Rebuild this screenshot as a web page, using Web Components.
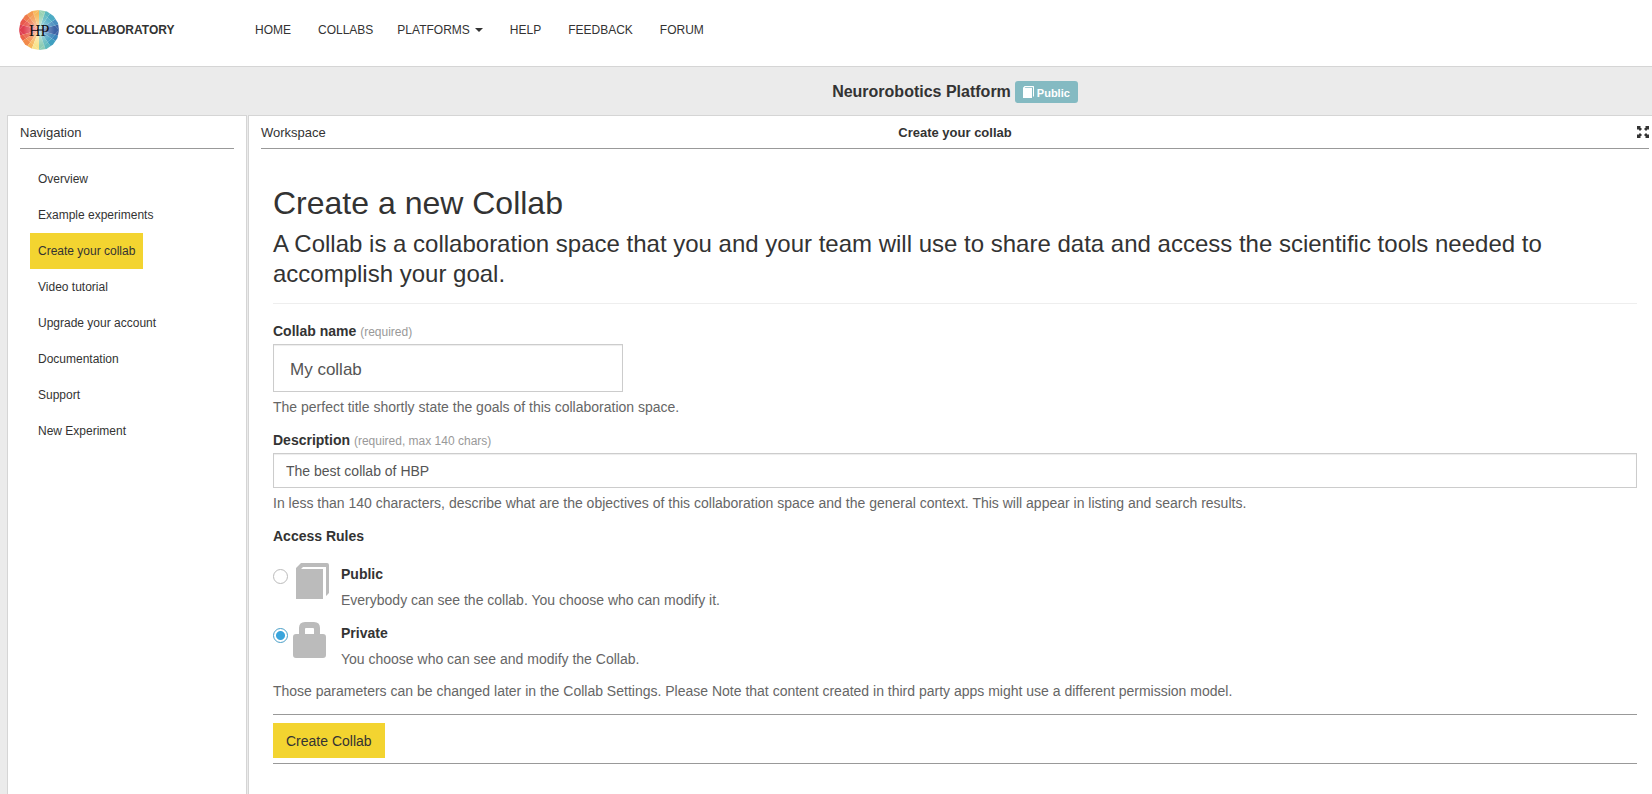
<!DOCTYPE html>
<html lang="en">
<head>
<meta charset="utf-8">
<title>Neurorobotics Platform - Create your collab</title>
<style>
html, body { height: 100%; margin: 0; }
body {
  --ink: #333;
  --muted: #666;
  --yellow: #f3d430;
  --rule: #999;
  --frame: #d5d5d5;
  font: 14px/20px "Liberation Sans", Arial, sans-serif;
  color: var(--ink);
  background: #ebebeb;
}
</style>
</head>
<body>
<collab-app></collab-app>

<script>
const define = (name, html) => {
  const template = document.createElement('template');
  template.innerHTML = html;
  customElements.define(name, class extends HTMLElement {
    constructor() {
      super();
      this.attachShadow({ mode: 'open' }).append(template.content.cloneNode(true));
    }
  });
};

define('hbp-logo', `
<style>
:host { display: block; width: 40px; height: 40px; }
svg { display: block; }
text { font: 16px "Liberation Serif", serif; fill: #111; }
</style>
<svg width="40" height="40" viewBox="0 0 40 40" role="img" aria-label="HBP">
  <defs>
    <clipPath id="disc"><path d="M20 0l8 1.500 6.500 4.500 4.500 7 1 7-1.500 8-4.500 6.500-6.500 4.500-7 1-8-1.500-6.500-4-4.500-7L0 20l1.500-8L6 5.500 13 1z"/></clipPath>
    <radialGradient id="glow"><stop offset="0" stop-color="#fff" stop-opacity=".6"/><stop offset="1" stop-color="#fff" stop-opacity="0"/></radialGradient>
  </defs>
  <g clip-path="url(#disc)">
    <path fill="#f6b95b" d="M20 20L13-1h7z"/><path fill="#f39a52" d="M20 20L4-1h9z"/>
    <path fill="#ee7a4a" d="M20 20L-1 5 4-1z"/><path fill="#e9584c" d="M20 20L-1 14V5z"/>
    <path fill="#df3f50" d="M20 20L-1 26V14z"/><path fill="#ea6248" d="M20 20L-1 34v-8z"/>
    <path fill="#f28a4a" d="M20 20L5 41l-6-7z"/><path fill="#f7b45a" d="M20 20l-8 21H5z"/>
    <path fill="#f9e28a" d="M20 20v21h-8z"/><path fill="#8cccb4" d="M20 20l7 21h-7z"/>
    <path fill="#5fb9bd" d="M20 20l15 21h-8z"/><path fill="#3f9fc0" d="M20 20l21 14-6 7z"/>
    <path fill="#3a86bb" d="M20 20l21 6v8z"/><path fill="#3b62a4" d="M20 20l21-6v12z"/>
    <path fill="#4a8fc0" d="M20 20L41 6v8z"/><path fill="#4cabc4" d="M20 20L34-1l7 7z"/>
    <path fill="#5cb8c0" d="M20 20l7-21h7z"/><path fill="#98d2b4" d="M20 20v-21h7z"/>
    <circle cx="20" cy="20" r="16" fill="url(#glow)"/>
    <path fill="none" stroke="#fff" stroke-opacity=".2" d="M20 0L8 11 0 20l8 9 12 11 12-11 8-9-8-9z"/>
  </g>
  <text x="10" y="26">HP</text><path stroke="#111" d="M18 20h6"/>
</svg>`);

define('site-header', `
<style>
:host { display: flex; align-items: center; box-sizing: border-box; height: 67px; padding: 0 19px 6px; background: #fff; border-bottom: 1px solid var(--frame); font-size: 12px; }
.brand { display: flex; align-items: center; gap: 7px; width: 236px; font-weight: bold; color: inherit; text-decoration: none; }
nav { display: flex; gap: 27px; }
nav a, button { color: inherit; text-decoration: none; white-space: nowrap; }
button { display: flex; align-items: center; gap: 5px; margin-left: -3px; padding: 0; border: 0; background: none; font: inherit; }
button::after { content: ""; border: 4px solid transparent; border-top-color: currentColor; border-bottom: 0; }
</style>
<a class="brand" href="#"><hbp-logo></hbp-logo><span>COLLABORATORY</span></a>
<nav><a href="#">HOME</a><a href="#">COLLABS</a><button type="button">PLATFORMS</button><a href="#">HELP</a><a href="#">FEEDBACK</a><a href="#">FORUM</a></nav>`);

define('book-icon', `
<style>:host { display: block; } svg { display: block; width: 100%; height: 100%; }</style>
<svg viewBox="0 0 33 36" fill="currentColor" aria-hidden="true"><path d="M0 6h27v30H0z"/><path d="M0 7V5l5-5h26q2 0 2 2v28l-3 3V4H7L4 7z"/></svg>`);

define('lock-icon', `
<style>:host { display: block; } svg { display: block; width: 100%; height: 100%; }</style>
<svg viewBox="0 0 33 36" fill="currentColor" aria-hidden="true"><path fill-rule="evenodd" d="M6 12V6q0-6 6-6h9q6 0 6 6v6h3q3 0 3 3v18q0 3-3 3H3q-3 0-3-3V15q0-3 3-3zm6 0h9V7q0-1-1-1h-7q-1 0-1 1z"/></svg>`);

define('context-bar', `
<style>
:host { display: flex; align-items: center; justify-content: center; gap: 4px; box-sizing: border-box; height: 48px; padding: 2px 3px 0 261px; }
h2 { margin: 0; font-size: 16px; line-height: 20px; }
.badge { display: flex; align-items: center; gap: 3px; box-sizing: border-box; height: 22px; padding: 2px 8px 0; border-radius: 3px; background: #84bac2; color: #fff; font-size: 11px; font-weight: bold; }
book-icon { width: 11px; height: 12px; margin-bottom: 2px; }
</style>
<h2>Neurorobotics Platform</h2><span class="badge"><book-icon></book-icon>Public</span>`);

define('side-nav', `
<style>
:host { display: block; box-sizing: border-box; padding: 7px 12px; background: #fff; border: solid var(--frame); border-width: 1px 1px 0; }
header { height: 25px; border-bottom: 1px solid var(--rule); font-size: 13px; }
ul { display: flex; flex-direction: column; align-items: flex-start; margin: 12px 0 0 10px; padding: 0; list-style: none; font-size: 12px; }
::slotted(a) { padding: 8px; color: inherit; text-decoration: none; }
::slotted(a[aria-current]) { background: var(--yellow); }
</style>
<header>Navigation</header>
<ul><slot></slot></ul>`);

define('work-space', `
<style>
:host { display: block; box-sizing: border-box; padding: 7px 3px 0 12px; background: #fff; border: solid var(--frame); border-width: 1px 0 0 1px; }
header { display: grid; grid-template-columns: 1fr auto 1fr; height: 25px; border-bottom: 1px solid var(--rule); font-size: 13px; }
button { justify-self: end; align-self: start; margin-top: 3px; padding: 0; border: 0; background: none; color: inherit; }
svg { display: block; }
main { padding: 0 12px; }
</style>
<header><span>Workspace</span><strong>Create your collab</strong>
<button type="button" aria-label="Full screen"><svg width="12" height="12" viewBox="0 0 12 12" fill="currentColor"><path d="M0 0h4L3 1l2 2-2 2-2-2-1 1zM12 0v4l-1-1-2 2-2-2 2-2-1-1zM0 12V8l1 1 2-2 2 2-2 2 1 1zM12 12H8l1-1-2-2 2-2 2 2 1-1z"/></svg></button></header>
<main><slot></slot></main>`);

define('collab-form', `
<style>
:host { display: block; }
h1, h3 { margin: 0; font-weight: normal; }
h1 { padding-top: 32px; font-size: 32px; line-height: 44px; }
h3 { padding: 4px 0 14px; font-size: 24px; line-height: 30px; border-bottom: 1px solid #eee; }
form { display: flex; flex-direction: column; gap: 13px; padding-top: 17px; }
p { margin: 0; color: var(--muted); }
.field label { display: block; margin-bottom: 3px; font-weight: bold; }
small { font-size: 12px; line-height: 12px; font-weight: normal; color: #999; }
.field p { margin-top: 5px; }
input[type=text] { display: block; box-sizing: border-box; width: 100%; height: 35px; margin: 0; padding: 0 12px; border: 1px solid #ccc; background: #fff; box-shadow: inset 0 1px 1px rgba(0,0,0,.075); color: #555; font: inherit; }
input[type=text].large { width: 350px; height: 48px; padding: 4px 16px 0; font-size: 17px; }
fieldset { margin: 0; padding: 0; border: 0; }
legend { padding: 0 0 17px; font-weight: bold; }
.rule { display: grid; grid-template-columns: 15px 43px 1fr; column-gap: 5px; min-height: 47px; margin-bottom: 12px; }
.rule label { font-weight: bold; }
.rule p { margin-top: 6px; }
.rule book-icon, .rule lock-icon { width: 33px; height: 36px; color: #bbb; }
.rule book-icon { margin-left: 3px; }
.rule div { padding-top: 1px; }
input[type=radio] { appearance: none; width: 15px; height: 15px; margin: 6px 0 0; border: 1px solid #bbb; border-radius: 50%; background: #fff; }
input[type=radio]:checked { border-color: #4a9fc8; background: radial-gradient(circle, #3aa5dc 4px, #fff 5px); }
footer { padding: 8px 0 5px; border: solid var(--rule); border-width: 1px 0; }
footer button { display: block; height: 35px; padding: 0 13px; border: 0; background: var(--yellow); color: inherit; font: inherit; }
</style>
<h1>Create a new Collab</h1>
<h3>A Collab is a collaboration space that you and your team will use to share data and access the scientific tools needed to accomplish your goal.</h3>
<form>
  <div class="field"><label for="name">Collab name <small>(required)</small></label><input type="text" class="large" id="name" value="My collab" required>
  <p>The perfect title shortly state the goals of this collaboration space.</p></div>
  <div class="field"><label for="desc">Description <small>(required, max 140 chars)</small></label><input type="text" id="desc" value="The best collab of HBP" maxlength="140" required>
  <p>In less than 140 characters, describe what are the objectives of this collaboration space and the general context. This will appear in listing and search results.</p></div>
  <fieldset>
    <legend>Access Rules</legend>
    <div class="rule"><input type="radio" name="access" id="public"><book-icon></book-icon><div><label for="public">Public</label><p>Everybody can see the collab. You choose who can modify it.</p></div></div>
    <div class="rule"><input type="radio" name="access" id="private" checked><lock-icon></lock-icon><div><label for="private">Private</label><p>You choose who can see and modify the Collab.</p></div></div>
    <p>Those parameters can be changed later in the Collab Settings. Please Note that content created in third party apps might use a different permission model.</p>
  </fieldset>
  <footer><button type="submit">Create Collab</button></footer>
</form>`);

define('collab-app', `
<style>
:host { display: flex; flex-direction: column; min-height: 100%; }
.columns { display: grid; grid-template-columns: 240px 1fr; column-gap: 1px; flex: 1; padding-left: 7px; }
</style>
<site-header></site-header>
<context-bar></context-bar>
<div class="columns">
  <side-nav>
    <a href="#">Overview</a><a href="#">Example experiments</a><a href="#" aria-current="page">Create your collab</a><a href="#">Video tutorial</a><a href="#">Upgrade your account</a><a href="#">Documentation</a><a href="#">Support</a><a href="#">New Experiment</a>
  </side-nav>
  <work-space><collab-form></collab-form></work-space>
</div>`);
</script>
</body>
</html>
